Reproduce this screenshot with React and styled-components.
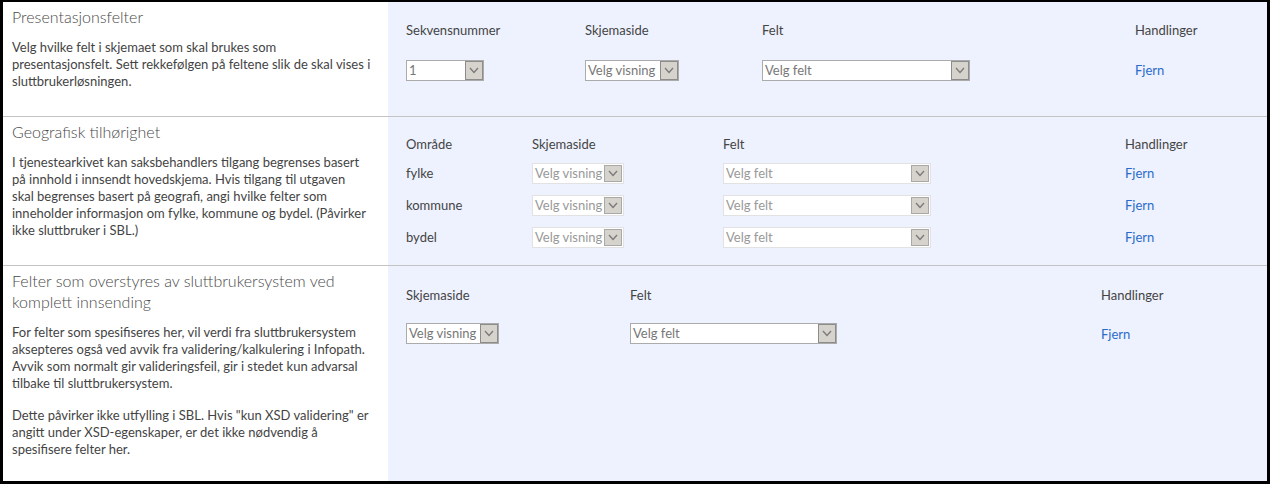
import styled, { createGlobalStyle } from "styled-components";

const GlobalStyle = createGlobalStyle`
	html, body {
		margin: 0;
		padding: 0;
		background: #000;
	}
	body {
		font-family: "Segoe UI", Lato, "Liberation Sans", sans-serif;
		font-size: 13px;
		color: #444;
	}
`;

// select boxes look like the old windows ones, so they are drawn by hand
const Chevron = () => (
	<svg width="10" height="7" viewBox="0 0 10 7">
		<path d="M1 1 L5 5.5 L9 1" fill="none" stroke="#7a7a7a" strokeWidth="1.3" />
	</svg>
);

const FakeSelect = ({ width, value, disabled }) => (
	<SelectBox $width={width} $disabled={disabled}>
		<SelectText $disabled={disabled}>{value}</SelectText>
		<ArrowBox $disabled={disabled}>
			<Chevron />
		</ArrowBox>
	</SelectBox>
);

const sections = [
	{
		title: ["Presentasjonsfelter"],
		text: [
			[
				"Velg hvilke felt i skjemaet som skal brukes som",
				"presentasjonsfelt. Sett rekkefølgen på feltene slik de skal vises i",
				"sluttbrukerløsningen.",
			],
		],
		cols: "179px 177px 373px auto",
		rows: "20px 60px",
		top: 18,
		head: ["Sekvensnummer", "Skjemaside", "Felt", "Handlinger"],
		data: [
			[
				{ w: 78, v: "1" },
				{ w: 94, v: "Velg visning" },
				{ w: 208, v: "Velg felt" },
			],
		],
	},
	{
		title: ["Geografisk tilhørighet"],
		text: [
			[
				"I tjenestearkivet kan saksbehandlers tilgang begrenses basert",
				"på innhold i innsendt hovedskjema. Hvis tilgang til utgaven",
				"skal begrenses basert på geografi, angi hvilke felter som",
				"inneholder informasjon om fylke, kommune og bydel. (Påvirker",
				"ikke sluttbruker i SBL.)",
			],
		],
		cols: "126px 191px 402px auto",
		rows: "23px 32px 32px 32px",
		top: 17,
		head: ["Område", "Skjemaside", "Felt", "Handlinger"],
		data: ["fylke", "kommune", "bydel"].map((area) => [
			{ label: area },
			{ w: 92, v: "Velg visning", off: true },
			{ w: 208, v: "Velg felt", off: true },
		]),
	},
	{
		title: ["Felter som overstyres av sluttbrukersystem ved", "komplett innsending"],
		text: [
			[
				"For felter som spesifiseres her, vil verdi fra sluttbrukersystem",
				"aksepteres også ved avvik fra validering/kalkulering i Infopath.",
				"Avvik som normalt gir valideringsfeil, gir i stedet kun advarsal",
				"tilbake til sluttbrukersystem.",
			],
			[
				'Dette påvirker ikke utfylling i SBL. Hvis "kun XSD validering" er',
				"angitt under XSD-egenskaper, er det ikke nødvendig å",
				"spesifisere felter her.",
			],
		],
		cols: "224px 471px auto",
		rows: "20px 57px",
		top: 19,
		head: ["Skjemaside", "Felt", "Handlinger"],
		data: [
			[
				{ w: 93, v: "Velg visning" },
				{ w: 207, v: "Velg felt" },
			],
		],
		last: true,
	},
];

export default function App() {
	return (
		<>
			<GlobalStyle />
			<Frame>
				{sections.map((s, i) => (
					<Section key={i} $last={s.last}>
						<Info $last={s.last}>
							<Heading>
								{s.title.map((t) => (
									<Line key={t}>{t}</Line>
								))}
							</Heading>
							{s.text.map((para, j) => (
								<Paragraph key={j}>
									{para.map((t) => (
										<Line key={t}>{t}</Line>
									))}
								</Paragraph>
							))}
						</Info>
						<Panel $top={s.top}>
							<FieldGrid $cols={s.cols} $rows={s.rows}>
								{s.head.map((h) => (
									<HeadCell key={h}>{h}</HeadCell>
								))}
								{s.data.map((row, r) => (
									<Row key={r}>
										{row.map((cell, c) => (
											<Cell key={c}>
												{cell.label ? (
													cell.label
												) : (
													<FakeSelect width={cell.w} value={cell.v} disabled={cell.off} />
												)}
											</Cell>
										))}
										<Cell>
											<RemoveLink href="#">Fjern</RemoveLink>
										</Cell>
									</Row>
								))}
							</FieldGrid>
						</Panel>
					</Section>
				))}
			</Frame>
		</>
	);
}

const Frame = styled.div`
	box-sizing: border-box;
	height: 484px;
	border: 3px solid #000;
	border-top-width: 2px;
	display: flex;
	flex-direction: column;
	background: #fff;
	overflow: hidden;
`;

const Section = styled.div`
	display: grid;
	grid-template-columns: 385px 1fr;
	border-bottom: ${(p) => (p.$last ? "none" : "1px solid #c3c3c3")};
	flex: ${(p) => (p.$last ? "1" : "none")};
	min-height: 0;
`;

const Info = styled.div`
	background: #fff;
	padding: 4px 12px ${(p) => (p.$last ? "10px" : "26px")} 9px;
`;

const Heading = styled.div`
	font-size: 16px;
	line-height: 21px;
	font-weight: 300;
	color: #4a4a4a;
	margin-bottom: 12px;
`;

const Paragraph = styled.div`
	line-height: 17px;
	color: #444;
	& + & {
		margin-top: 15px;
	}
`;

const Line = styled.div`
	white-space: nowrap;
`;

const Panel = styled.div`
	background: #eef2fe;
	padding: ${(p) => p.$top}px 18px 0 18px;
`;

const FieldGrid = styled.div`
	display: grid;
	grid-template-columns: ${(p) => p.$cols};
	grid-template-rows: ${(p) => p.$rows};
	align-content: start;
`;

const HeadCell = styled.div`
	line-height: 20px;
	align-self: start;
	white-space: nowrap;
`;

const Row = styled.div`
	display: contents;
`;

const Cell = styled.div`
	display: flex;
	align-items: center;
	white-space: nowrap;
`;

const SelectBox = styled.div`
	box-sizing: border-box;
	width: ${(p) => p.$width}px;
	height: 21px;
	display: flex;
	align-items: stretch;
	background: #fff;
	border: 1px solid ${(p) => (p.$disabled ? "#e2e2e2" : "#ababab")};
`;

const SelectText = styled.div`
	flex: 1;
	overflow: hidden;
	padding-left: 2px;
	line-height: 19px;
	color: ${(p) => (p.$disabled ? "#999" : "#777")};
`;

const ArrowBox = styled.div`
	box-sizing: border-box;
	width: 18px;
	display: flex;
	align-items: center;
	justify-content: center;
	background: #d6d3cd;
	border: 1px solid ${(p) => (p.$disabled ? "#a9a9a9" : "#8c8c8c")};
	margin: ${(p) => (p.$disabled ? "1px" : "0")};
`;

const RemoveLink = styled.a`
	color: #2a6bc9;
	text-decoration: none;
`;
